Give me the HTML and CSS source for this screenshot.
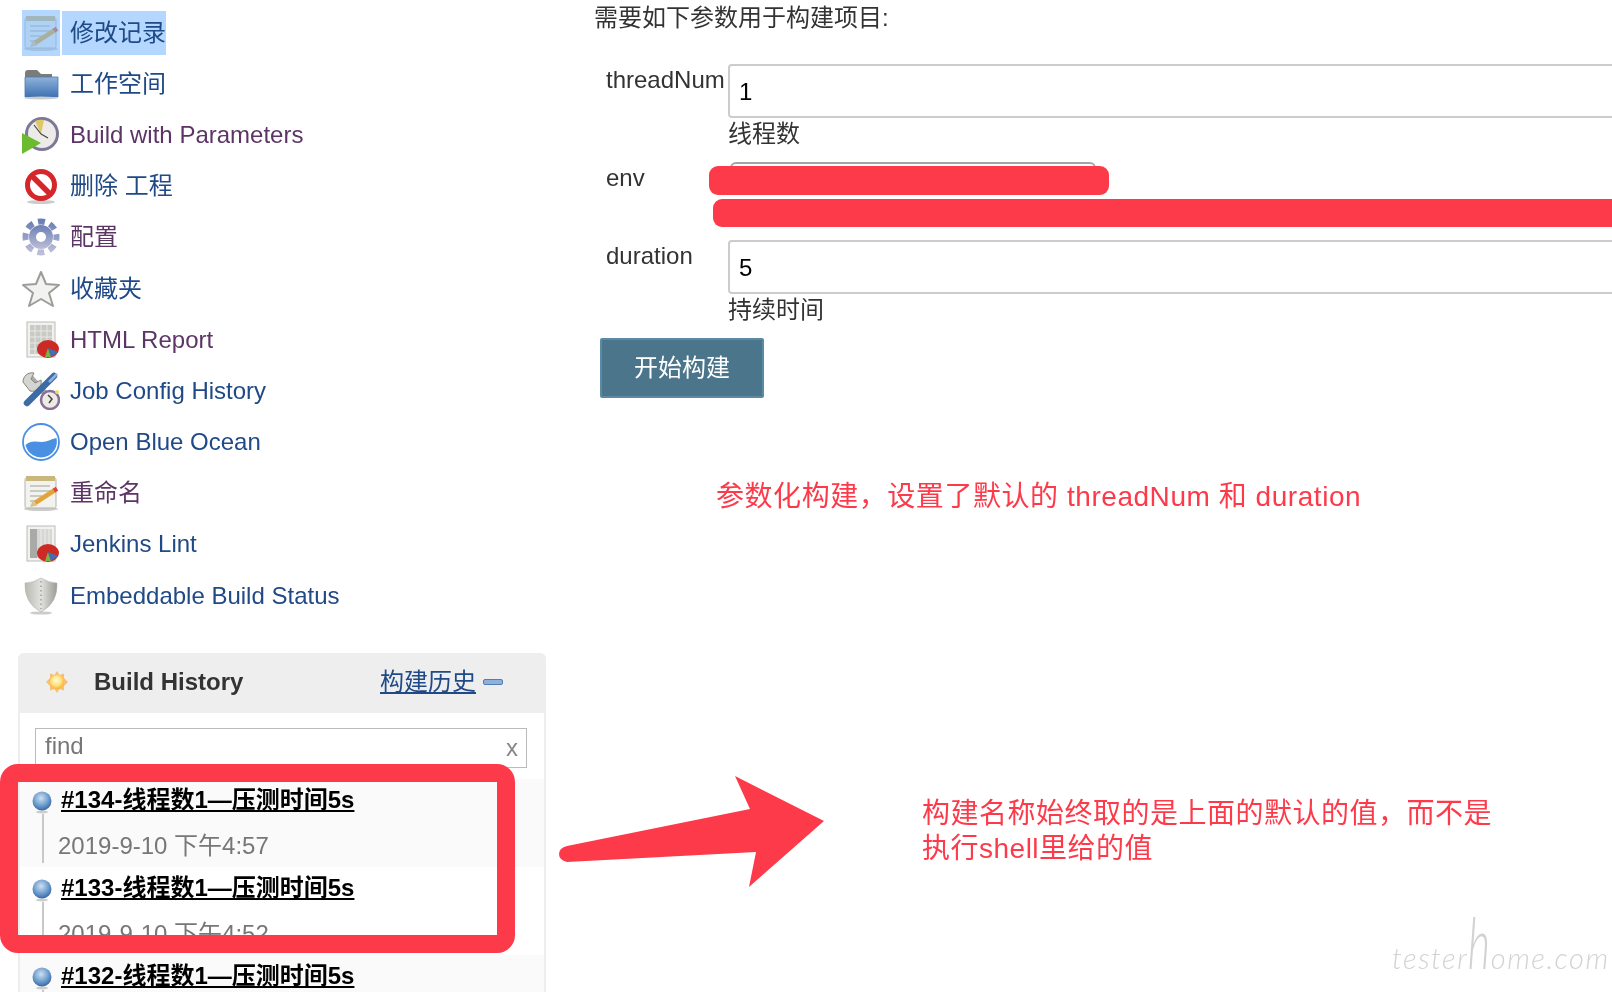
FILE: index.html
```html
<!DOCTYPE html>
<html lang="en">
<head>
  <meta charset="UTF-8" />
  <title>Jenkins - Build with Parameters</title>
  <link rel="stylesheet" href="styles.css">
</head>
<body>

<!-- shared gradients and icons -->
<svg class="svg-defs" aria-hidden="true">
  <defs>
    <linearGradient id="gradFolder" x1="0" y1="0" x2="0" y2="1">
      <stop offset="0" stop-color="#8fb3dc"/>
      <stop offset="1" stop-color="#3d72b0"/>
    </linearGradient>
    <linearGradient id="gradGear" x1="0" y1="0" x2="0" y2="1">
      <stop offset="0" stop-color="#6a80b5"/>
      <stop offset="1" stop-color="#bdbdd8"/>
    </linearGradient>
    <linearGradient id="gradShield" x1="0" y1="0" x2="1" y2="0">
      <stop offset="0" stop-color="#b8b9b3"/>
      <stop offset=".5" stop-color="#e2e2de"/>
      <stop offset="1" stop-color="#9a9b95"/>
    </linearGradient>
    <radialGradient id="gradBall" cx=".45" cy=".35" r=".7">
      <stop offset="0" stop-color="#cfe0f0"/>
      <stop offset=".55" stop-color="#6f9fd0"/>
      <stop offset="1" stop-color="#2f5f9c"/>
    </radialGradient>
    <radialGradient id="gradSun" cx=".45" cy=".4" r=".6">
      <stop offset="0" stop-color="#fffbe0"/>
      <stop offset=".6" stop-color="#ffe27a"/>
      <stop offset="1" stop-color="#f9b233"/>
    </radialGradient>

    <symbol id="iconNotepad" viewBox="0 0 38 38">
      <ellipse cx="19" cy="35" rx="17" ry="2" fill="#ccc"/>
      <rect x="3" y="4" width="31" height="30" rx="1.5" fill="#f2f2ee" stroke="#b4b4ae"/>
      <rect x="4" y="2" width="29" height="5" fill="#c9b77c"/>
      <path d="M8 12h20M8 17h20M8 22h12M8 27h8" stroke="#bdbdb8" stroke-width="1.5"/>
      <path d="M13 29L33 16" stroke="#e3a33a" stroke-width="4.5"/>
      <path d="M8 33l2.5-6 4.5 4.5z" fill="#d8c18e"/>
      <path d="M32 16.6l3-2" stroke="#e0463c" stroke-width="4.5"/>
    </symbol>

    <symbol id="iconReport" viewBox="0 0 38 38">
      <rect x="5" y="1" width="28" height="35" fill="#f1f1ef" stroke="#bcbcb8"/>
      <rect x="8" y="4" width="22" height="29" fill="#c9c9c6"/>
      <path d="M8 10h22M8 16h22M8 22h22M8 28h22M13 4v29M19 4v29M25 4v29" stroke="#e8e8e6"/>
      <ellipse cx="26" cy="28" rx="11" ry="9" fill="#cc2a24"/>
      <path d="M26 27l-3 9h6z" fill="#7cb342"/>
      <path d="M26 27l3 9 7-5z" fill="#3f6fb5"/>
    </symbol>

    <symbol id="iconLint" viewBox="0 0 38 38">
      <rect x="5" y="1" width="28" height="35" fill="#f1f1ef" stroke="#bcbcb8"/>
      <rect x="8" y="4" width="22" height="29" fill="#d6d6d3"/>
      <rect x="8" y="4" width="7" height="29" fill="#a9a9a6"/>
      <path d="M19 4v29M23 4v29M27 4v29" stroke="#ececea"/>
      <ellipse cx="26" cy="28" rx="11" ry="9" fill="#cc2a24"/>
      <path d="M26 27l-3 9h6z" fill="#7cb342"/>
      <path d="M26 27l3 9 7-5z" fill="#3f6fb5"/>
    </symbol>

    <symbol id="iconBall" viewBox="0 0 20 23">
      <ellipse cx="10" cy="21" rx="6" ry="1.5" fill="#ccc"/>
      <circle cx="10" cy="10" r="9.5" fill="url(#gradBall)"/>
    </symbol>
  </defs>
</svg>

<div class="page">

  <div class="sidebar">
    <ul class="task-list">
      <li class="selected">
        <span class="icon-box"><svg class="icon"><use href="#iconNotepad"/></svg></span>
        <a href="#" class="link">修改记录</a>
      </li>
      <li>
        <svg class="icon" viewBox="0 0 38 38">
          <path d="M3 8q0-3 3-3h9l4 4h11v10H3z" fill="#7b7b78"/>
          <path d="M3 12h33v20H3z" fill="url(#gradFolder)" stroke="#4a7ab5" stroke-width=".8"/>
          <ellipse cx="19" cy="33" rx="17" ry="1.5" fill="#ccc"/>
        </svg>
        <a href="#" class="link">工作空间</a>
      </li>
      <li>
        <svg class="icon" viewBox="0 0 38 38">
          <circle cx="20" cy="18" r="15.5" fill="#ecebe8" stroke="#7d7896" stroke-width="3"/>
          <path d="M19 18L13 5q5-2 9-1z" fill="#e0c766"/>
          <path d="M19 18L12 9M19 18l7 4" stroke="#444" stroke-width="1.2"/>
          <path d="M0 17l19 10L0 38z" fill="#6cbb2e"/>
        </svg>
        <a href="#" class="link visited">Build with Parameters</a>
      </li>
      <li>
        <svg class="icon" viewBox="0 0 38 38">
          <ellipse cx="19" cy="35" rx="14" ry="2" fill="#ccc"/>
          <circle cx="19" cy="18" r="13.5" fill="#fff" stroke="#d5262b" stroke-width="5"/>
          <path d="M10 9l18 18" stroke="#d5262b" stroke-width="5.5"/>
        </svg>
        <a href="#" class="link">删除 工程</a>
      </li>
      <li>
        <svg class="icon" viewBox="0 0 38 38">
          <circle cx="19" cy="19" r="12" fill="url(#gradGear)"/>
          <circle cx="19" cy="19" r="15.5" fill="none" stroke="url(#gradGear)" stroke-width="6" stroke-dasharray="7 5.17" stroke-dashoffset="3.5"/>
          <circle cx="19" cy="19" r="5" fill="#fff"/>
        </svg>
        <a href="#" class="link visited">配置</a>
      </li>
      <li>
        <svg class="icon" viewBox="0 0 38 38">
          <polygon points="19,2 24,14 37,15 27,23 31,36 19,29 7,36 11,23 1,15 14,14" fill="#f2f2f0" stroke="#9c9c98" stroke-width="2" stroke-linejoin="round"/>
        </svg>
        <a href="#" class="link">收藏夹</a>
      </li>
      <li>
        <svg class="icon"><use href="#iconReport"/></svg>
        <a href="#" class="link visited">HTML Report</a>
      </li>
      <li>
        <svg class="icon" viewBox="0 0 38 38">
          <path d="M8 5l22 24" stroke="#a9aba6" stroke-width="6"/>
          <path d="M1 10a9 9 0 0 1 11-9l-3 6 4 4 6-3a9 9 0 0 1-11 11z" fill="#d4d5d1" stroke="#85867f"/>
          <path d="M32 4L5 31" stroke="#3d6ba6" stroke-width="6.5" stroke-linecap="round"/>
          <path d="M35 2l-8 8" stroke="#8fb3dc" stroke-width="2.5"/>
          <circle cx="28" cy="28" r="9" fill="#eeeae4" stroke="#85709c" stroke-width="2.5"/>
          <path d="M26 23l4 4-3 4" fill="none" stroke="#444" stroke-width="1.5"/>
          <circle cx="35" cy="20" r="2" fill="#f0e060"/>
        </svg>
        <a href="#" class="link">Job Config History</a>
      </li>
      <li>
        <svg class="icon" viewBox="0 0 38 38">
          <circle cx="19" cy="19" r="18" fill="#fff" stroke="#4a90e2" stroke-width="1.8"/>
          <path d="M3.5 22C9 17 14 19 20 19c5 0 9-3 14.5-4a15.8 15.8 0 0 1-31 7z" fill="#4a90e2"/>
        </svg>
        <a href="#" class="link">Open Blue Ocean</a>
      </li>
      <li>
        <svg class="icon"><use href="#iconNotepad"/></svg>
        <a href="#" class="link visited">重命名</a>
      </li>
      <li>
        <svg class="icon"><use href="#iconLint"/></svg>
        <a href="#" class="link">Jenkins Lint</a>
      </li>
      <li>
        <svg class="icon" viewBox="0 0 38 38">
          <ellipse cx="19" cy="36" rx="11" ry="1.6" fill="#ccc"/>
          <path d="M19 1q8 5 16 5 1 20-16 29Q2 26 3 6q8 0 16-5z" fill="url(#gradShield)" stroke="#b0b1ab" stroke-width=".6"/>
          <path d="M19 4v28" stroke="#9a9b95" stroke-width="1.4" stroke-dasharray="1.5 3"/>
        </svg>
        <a href="#" class="link">Embeddable Build Status</a>
      </li>
    </ul>

    <div class="history-panel">
      <div class="history-header">
        <svg class="sun-icon" viewBox="0 0 22 22">
          <polygon points="11,0 13.5,4 18,2.5 18,7 22,11 18,15 18,19.5 13.5,18 11,22 8.5,18 4,19.5 4,15 0,11 4,7 4,2.5 8.5,4" fill="#f7bf72"/>
          <circle cx="11" cy="11" r="7" fill="url(#gradSun)"/>
        </svg>
        <span class="history-title">Build History</span>
        <a href="#" class="history-link">构建历史</a>
        <span class="minus-icon"></span>
      </div>

      <div class="history-search">
        <input type="text" class="find-input" placeholder="find">
        <span class="find-clear">x</span>
      </div>

      <div class="build-row">
        <div class="build-status"><svg class="ball"><use href="#iconBall"/></svg><span class="status-line"></span></div>
        <div class="build-info">
          <a href="#" class="build-name">#134-线程数1—压测时间5s</a>
          <div class="build-date">2019-9-10 下午4:57</div>
        </div>
      </div>
      <div class="build-row">
        <div class="build-status"><svg class="ball"><use href="#iconBall"/></svg><span class="status-line"></span></div>
        <div class="build-info">
          <a href="#" class="build-name">#133-线程数1—压测时间5s</a>
          <div class="build-date">2019-9-10 下午4:52</div>
        </div>
      </div>
      <div class="build-row">
        <div class="build-status"><svg class="ball"><use href="#iconBall"/></svg><span class="status-line"></span></div>
        <div class="build-info">
          <a href="#" class="build-name">#132-线程数1—压测时间5s</a>
        </div>
      </div>
    </div>
  </div>

  <div class="main">
    <p class="intro">需要如下参数用于构建项目:</p>

    <div class="param-row">
      <label class="param-label">threadNum</label>
      <div>
        <input type="text" class="param-input" value="1">
        <div class="param-help">线程数</div>
      </div>
    </div>

    <div class="param-row param-env">
      <label class="param-label">env</label>
      <div>
        <select class="param-select"></select>
        <div class="param-spacer"></div>
      </div>
    </div>

    <div class="param-row">
      <label class="param-label">duration</label>
      <div>
        <input type="text" class="param-input" value="5">
        <div class="param-help">持续时间</div>
      </div>
    </div>

    <button class="build-button">开始构建</button>
  </div>

  <!-- red annotations on top of the screenshot -->
  <div class="redact redact-select"></div>
  <div class="redact redact-help"></div>
  <div class="note note-params">参数化构建，设置了默认的 threadNum 和 duration</div>
  <div class="note note-name">构建名称始终取的是上面的默认的值，而不是<br>执行shell里给的值</div>
  <div class="mark-box"></div>
  <svg class="mark-arrow" viewBox="0 0 278 112">
    <path d="M189 0L204 33 21 70Q13 72 13 78T21 86L210 76 203 111 278 45z" fill="#fd3a4a"/>
  </svg>
  <div class="watermark">tester<span class="watermark-h">h</span>ome.com</div>

</div>

</body>
</html>
```

FILE: styles.css
```css
body {
  margin: 0;
  font-family: "Liberation Sans", "Noto Sans CJK SC", sans-serif;
  font-size: 24px;
  color: #333;
  background-color: #fff;
}

.svg-defs {
  position: absolute;
  width: 0;
  height: 0;
}

.page {
  position: relative;
  display: flex;
  height: 992px;
  overflow: hidden;
}

/* left column */
.sidebar {
  flex: none;
  width: 528px;
  margin-left: 18px;
}

.task-list {
  list-style: none;
  margin: 0 0 0 -18px;
  padding: 7px 0 0 22px;
}

.task-list li {
  display: flex;
  align-items: center;
  height: 51.2px;
}

.icon {
  flex: none;
  width: 38px;
  height: 38px;
  margin-right: 10px;
  filter: blur(0.5px);
}

.link {
  line-height: 32px;
  text-decoration: none;
  color: #204a87;
}

.link.visited {
  color: #5c3566;
}

.selected .icon-box {
  flex: none;
  display: flex;
  align-items: center;
  width: 38px;
  height: 46px;
  margin-right: 2px;
  background-color: #b3d7ff;
}

.selected .icon {
  margin-right: 0;
  mix-blend-mode: multiply;
  opacity: 0.5;
}

.selected .link {
  padding: 6px 0 6px 8px;
  background-color: #b3d7ff;
}

/* build history */
.history-panel {
  margin-top: 32px;
  border: solid #eee;
  border-width: 0 2px;
  border-radius: 6px 6px 0 0;
}

.history-header {
  display: flex;
  align-items: center;
  box-sizing: border-box;
  height: 60px;
  margin: 0 -2px;
  padding: 0 43px 2px 28px;
  line-height: 32px;
  background-color: #eee;
  border-radius: 6px 6px 0 0;
}

.sun-icon {
  width: 22px;
  height: 22px;
  margin-right: 26px;
  filter: blur(0.4px);
}

.history-title {
  font-weight: bold;
}

.history-link {
  margin-left: auto;
  color: #204a87;
}

.minus-icon {
  width: 18px;
  height: 4px;
  margin-left: 7px;
  background-color: #8fb0d8;
  border: 1px solid #4f7db8;
  border-radius: 2px;
}

.history-search {
  position: relative;
  height: 66px;
  padding: 15px 17px 0 15px;
  box-sizing: border-box;
}

.find-input {
  display: block;
  box-sizing: border-box;
  width: 100%;
  height: 40px;
  margin: 0;
  padding: 0 9px 4px;
  font: inherit;
  color: #333;
  background-color: #fff;
  border: 1px solid #bbb;
  border-radius: 0;
}

.find-input::placeholder {
  color: #777;
  opacity: 1;
}

.find-clear {
  position: absolute;
  top: 21px;
  right: 26px;
  color: #888;
}

.build-row {
  display: flex;
  height: 88px;
  padding-left: 12px;
  box-sizing: border-box;
}

.build-row:nth-child(odd) {
  background-color: #fafafa;
}

.build-status {
  display: flex;
  flex-direction: column;
  align-items: center;
  width: 20px;
  padding: 12px 0 4px;
  box-sizing: border-box;
}

.ball {
  flex: none;
  width: 20px;
  height: 23px;
  filter: blur(0.3px);
}

.status-line {
  flex: 1;
  width: 2px;
  margin-left: 2px;
  background-color: #c8c8c8;
}

.build-info {
  margin-left: 9px;
  padding-top: 5px;
}

.build-name {
  display: block;
  line-height: 32px;
  font-weight: bold;
  color: #000;
}

.build-date {
  margin: 14px 0 0 -3px;
  line-height: 32px;
  color: #777;
}

/* parameters form */
.main {
  flex: none;
  width: 1066px;
  padding-left: 48px;
  box-sizing: border-box;
}

.intro {
  height: 36px;
  margin: 0;
  line-height: 36px;
}

.param-row {
  display: grid;
  grid-template-columns: 122px 1200px;
  margin: 28px 0 0 12px;
}

.param-row + .param-row {
  margin-top: 13px;
}

.param-label {
  line-height: 32px;
}

.param-input {
  display: block;
  box-sizing: border-box;
  width: 100%;
  height: 54px;
  margin: 0;
  padding: 2px 9px 0;
  font: inherit;
  color: #000;
  background-color: #fff;
  border: 2px solid #ccc;
  border-radius: 4px;
}

.param-select {
  display: block;
  box-sizing: border-box;
  width: 366px;
  height: 33px;
  margin-left: 2px;
  appearance: none;
  background-color: #fff;
  border: 2px solid #a5a5a5;
  border-radius: 6px;
}

.param-help {
  height: 31px;
  line-height: 32px;
}

.param-spacer {
  height: 32px;
}

.build-button {
  display: block;
  width: 164px;
  height: 60px;
  margin: 13px 0 0 6px;
  padding: 0 0 6px;
  font: inherit;
  color: #fff;
  background-color: #4b758b;
  border: 2px solid #5b8aa6;
  border-radius: 2px;
}

/* annotations */
.redact {
  position: absolute;
  background-color: #fd3a4a;
  border-radius: 9px;
}

.redact-select {
  left: 709px;
  top: 166px;
  width: 400px;
  height: 29px;
}

.redact-help {
  left: 713px;
  top: 199px;
  width: 1000px;
  height: 28px;
}

.note {
  position: absolute;
  font-size: 28px;
  line-height: 35px;
  letter-spacing: 0.55px;
  color: #fd3a4a;
  white-space: nowrap;
}

.note-params {
  left: 716px;
  top: 479px;
}

.note-name {
  left: 922px;
  top: 796px;
  letter-spacing: 0.5px;
}

.mark-box {
  position: absolute;
  left: 0;
  top: 764px;
  box-sizing: border-box;
  width: 515px;
  height: 189px;
  border: 18px solid #fd3a4a;
  border-radius: 18px;
}

.mark-arrow {
  position: absolute;
  left: 546px;
  top: 776px;
  width: 278px;
  height: 112px;
  overflow: visible;
}

.watermark {
  position: absolute;
  left: 1392px;
  top: 918px;
  font-family: "Lato", sans-serif;
  font-size: 29px;
  font-weight: 300;
  font-style: italic;
  line-height: 80px;
  letter-spacing: 1.5px;
  color: #d2d2d2;
  white-space: nowrap;
}

.watermark-h {
  display: inline-block;
  margin: 0 -8px;
  font-size: 72px;
  line-height: 0;
  transform: scaleX(0.6);
}
```
